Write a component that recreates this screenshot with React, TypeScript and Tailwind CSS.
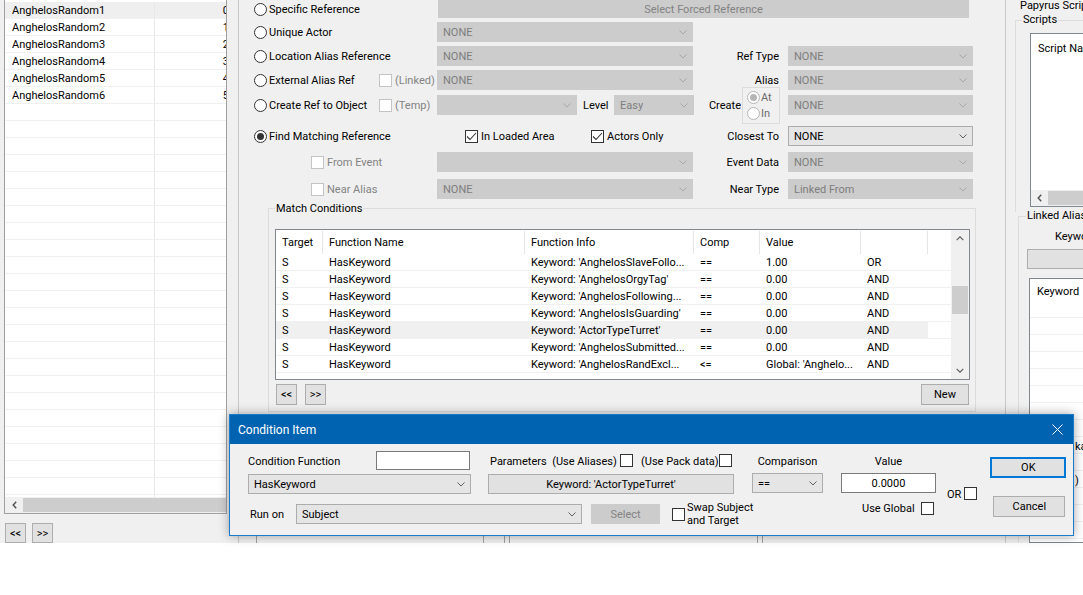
import React from "react"

const Chevron = ({ color = "#606060" }: { color?: string }) => (
  <svg width="8" height="5" viewBox="0 0 8 5" className="shrink-0">
    <path d="M0.5 0.5L4 4L7.5 0.5" fill="none" stroke={color} strokeWidth="1" />
  </svg>
)

const LeftArrow = () => (
  <svg width="5" height="8" viewBox="0 0 5 8">
    <path d="M4.2 0.7L1.2 4L4.2 7.3" fill="none" stroke="#505050" strokeWidth="1.4" />
  </svg>
)

const UpArrow = ({ down = false }: { down?: boolean }) => (
  <svg width="8" height="5" viewBox="0 0 8 5">
    <path d={down ? "M0.7 0.8L4 4.2L7.3 0.8" : "M0.7 4.2L4 0.8L7.3 4.2"} fill="none" stroke="#606060" strokeWidth="1.2" />
  </svg>
)

function Combo({ text = "", disabled = false, className = "" }: { text?: string; disabled?: boolean; className?: string }) {
  return (
    <div
      className={`h-[20px] shrink-0 flex items-center justify-between pl-[5px] pr-[5px] border ${
        disabled ? "bg-[#cccccc] border-[#cccccc] text-[#7d7d7d]" : "bg-[#e5e5e5] border-[#acacac] text-black"
      } ${className}`}
    >
      <span className="truncate">{text}</span>
      <Chevron color={disabled ? "#a9a9a9" : "#606060"} />
    </div>
  )
}

function Btn({ children, className = "", disabled = false }: { children?: React.ReactNode; className?: string; disabled?: boolean }) {
  return (
    <div
      className={`shrink-0 flex items-center justify-center border ${
        disabled ? "bg-[#cccccc] border-[#cccccc] text-[#838383]" : "bg-[#e1e1e1] border-[#adadad] text-black"
      } ${className}`}
    >
      {children}
    </div>
  )
}

function Check({ checked = false, disabled = false }: { checked?: boolean; disabled?: boolean }) {
  return (
    <span
      className={`w-[13px] h-[13px] shrink-0 border flex items-center justify-center bg-white ${
        disabled ? "border-[#c4c4c4]" : "border-[#333333]"
      }`}
    >
      {checked && (
        <svg width="11" height="9" viewBox="0 0 11 9">
          <path d="M1 4.5L4 7.5L10 1" fill="none" stroke="#333333" strokeWidth="1.1" />
        </svg>
      )}
    </span>
  )
}

function Radio({ checked = false, disabled = false }: { checked?: boolean; disabled?: boolean }) {
  return (
    <span
      className={`w-[13px] h-[13px] shrink-0 rounded-full border flex items-center justify-center bg-white ${
        disabled ? "border-[#b5b5b5]" : "border-[#333333]"
      }`}
    >
      {checked && <span className={`w-[7px] h-[7px] rounded-full ${disabled ? "bg-[#b5b5b5]" : "bg-[#333333]"}`} />}
    </span>
  )
}

const leftItems = ["AnghelosRandom1", "AnghelosRandom2", "AnghelosRandom3", "AnghelosRandom4", "AnghelosRandom5", "AnghelosRandom6"]

function LeftList() {
  const rows = Array.from({ length: 30 }, (_, i) => i)
  return (
    <div className="w-[227px] shrink-0 flex flex-col">
      <div className="ml-[4px] h-[524px] border-l border-r border-b border-[#a0a0a0] bg-white flex flex-col overflow-hidden">
        <div className="flex-1 pt-[2px] overflow-hidden">
          {rows.map((i) => (
            <div key={i} className={`h-[17px] flex border-b border-[#f0f0f0] ${i === 0 ? "bg-[#efefef]" : ""}`}>
              <div className="w-[150px] shrink-0 border-r border-[#e8e8e8] pl-[7px] flex items-center">{leftItems[i] ?? ""}</div>
              <div className="flex-1 flex items-center justify-end">
                <span className="-mr-[3px]">{i < 6 ? i : ""}</span>
              </div>
            </div>
          ))}
        </div>
        <div className="h-[16px] shrink-0 flex bg-[#f0f0f0]">
          <div className="w-[18px] flex items-center justify-center">
            <LeftArrow />
          </div>
          <div className="flex-1 bg-[#cdcdcd] my-[1px]" />
        </div>
      </div>
      <div className="mt-[9px] ml-[5px] flex gap-[6px]">
        <Btn className="w-[21px] h-[20px]">&lt;&lt;</Btn>
        <Btn className="w-[21px] h-[20px]">&gt;&gt;</Btn>
      </div>
    </div>
  )
}

const condRows = [
  ["S", "HasKeyword", "Keyword: 'AnghelosSlaveFollo...", "==", "1.00", "OR"],
  ["S", "HasKeyword", "Keyword: 'AnghelosOrgyTag'", "==", "0.00", "AND"],
  ["S", "HasKeyword", "Keyword: 'AnghelosFollowing...", "==", "0.00", "AND"],
  ["S", "HasKeyword", "Keyword: 'AnghelosIsGuarding'", "==", "0.00", "AND"],
  ["S", "HasKeyword", "Keyword: 'ActorTypeTurret'", "==", "0.00", "AND"],
  ["S", "HasKeyword", "Keyword: 'AnghelosSubmitted...", "==", "0.00", "AND"],
  ["S", "HasKeyword", "Keyword: 'AnghelosRandExcl...", "<=", "Global: 'Anghelo...", "AND"],
]
const colW = ["w-[47px]", "w-[202px]", "w-[169px]", "w-[66px]", "w-[101px]", "w-[67px]"]
const headers = ["Target", "Function Name", "Function Info", "Comp", "Value", ""]

function ConditionsTable() {
  return (
    <div className="mt-[14px] w-[695px] h-[151px] border border-[#828790] bg-white flex overflow-hidden">
      <div className="w-[675px] shrink-0 flex flex-col">
        <div className="h-[24px] shrink-0 flex pt-[1px]">
          {headers.map((h, i) => (
            <div key={i} className={`${colW[i]} shrink-0 border-r border-[#e5e5e5] pl-[6px] flex items-center`}>
              {h}
            </div>
          ))}
        </div>
        {condRows.map((r, ri) => (
          <div key={ri} className="h-[17px] shrink-0 flex border-b border-[#f0f0f0]">
            <div className={`flex ${ri === 4 ? "bg-[#f0f0f0]" : ""}`}>
              {r.map((c, ci) => (
                <div key={ci} className={`${colW[ci]} shrink-0 pl-[6px] pt-[1px] flex items-center overflow-hidden`}>
                  {c}
                </div>
              ))}
            </div>
          </div>
        ))}
      </div>
      <div className="w-[18px] shrink-0 bg-[#f0f0f0] flex flex-col">
        <div className="h-[17px] flex items-center justify-center">
          <UpArrow />
        </div>
        <div className="h-[39px]" />
        <div className="h-[28px] mx-[1px] bg-[#cdcdcd]" />
        <div className="flex-1" />
        <div className="h-[17px] flex items-center justify-center">
          <UpArrow down />
        </div>
      </div>
    </div>
  )
}

function RightLabel({ children }: { children: React.ReactNode }) {
  return <div className="w-[87px] shrink-0 text-right pr-[1px]">{children}</div>
}

function MiddlePanel() {
  return (
    <div className="w-[767px] shrink-0 border-l border-[#c8c8c8] flex flex-col pl-[15px]">
      {/* Specific reference */}
      <div className="h-[18px] flex items-center">
        <div className="w-[184px] shrink-0 flex items-center gap-[2px]">
          <Radio />
          <span>Specific Reference</span>
        </div>
        <Btn disabled className="w-[531px] h-[18px]">
          Select Forced Reference
        </Btn>
      </div>

      <div className="mt-[4px] h-[20px] flex items-center">
        <div className="w-[183px] shrink-0 flex items-center gap-[2px]">
          <Radio />
          <span>Unique Actor</span>
        </div>
        <Combo disabled text="NONE" className="w-[256px]" />
      </div>

      <div className="mt-[4px] h-[20px] flex items-center">
        <div className="w-[183px] shrink-0 flex items-center gap-[2px]">
          <Radio />
          <span>Location Alias Reference</span>
        </div>
        <Combo disabled text="NONE" className="w-[256px]" />
        <RightLabel>Ref Type</RightLabel>
        <Combo disabled text="NONE" className="ml-[8px] w-[185px]" />
      </div>

      <div className="mt-[4px] h-[20px] flex items-center">
        <div className="w-[125px] shrink-0 flex items-center gap-[2px]">
          <Radio />
          <span>External Alias Ref</span>
        </div>
        <div className="w-[58px] shrink-0 flex items-center gap-[3px] text-[#838383]">
          <Check disabled />
          <span>(Linked)</span>
        </div>
        <Combo disabled text="NONE" className="w-[256px]" />
        <RightLabel>Alias</RightLabel>
        <Combo disabled text="NONE" className="ml-[8px] w-[185px]" />
      </div>

      <div className="mt-[5px] h-[20px] flex items-center">
        <div className="w-[125px] shrink-0 flex items-center gap-[2px]">
          <Radio />
          <span>Create Ref to Object</span>
        </div>
        <div className="w-[58px] shrink-0 flex items-center gap-[3px] text-[#838383]">
          <Check disabled />
          <span>(Temp)</span>
        </div>
        <Combo disabled className="w-[140px]" />
        <div className="w-[37px] shrink-0 pl-[6px]">Level</div>
        <Combo disabled text="Easy" className="w-[80px]" />
        <div className="w-[48px] shrink-0 text-right pr-[1px]">Create</div>
        <div className="w-[38px] h-[37px] shrink-0 border border-[#dcdcdc] flex flex-col justify-center gap-[3px] pl-[4px] text-[#6d6d6d]">
          <div className="flex items-center gap-[1px]">
            <Radio disabled checked />
            <span>At</span>
          </div>
          <div className="flex items-center gap-[1px]">
            <Radio disabled />
            <span>In</span>
          </div>
        </div>
        <Combo disabled text="NONE" className="ml-[8px] w-[185px]" />
      </div>

      <div className="mt-[11px] h-[20px] flex items-center">
        <div className="w-[211px] shrink-0 flex items-center gap-[2px]">
          <Radio checked />
          <span>Find Matching Reference</span>
        </div>
        <div className="w-[126px] shrink-0 flex items-center gap-[3px]">
          <Check checked />
          <span>In Loaded Area</span>
        </div>
        <div className="w-[102px] shrink-0 flex items-center gap-[3px]">
          <Check checked />
          <span>Actors Only</span>
        </div>
        <RightLabel>Closest To</RightLabel>
        <Combo text="NONE" className="ml-[8px] w-[185px]" />
      </div>

      <div className="mt-[6px] h-[20px] flex items-center">
        <div className="w-[57px] shrink-0" />
        <div className="w-[126px] shrink-0 flex items-center gap-[3px] text-[#838383]">
          <Check disabled />
          <span>From Event</span>
        </div>
        <Combo disabled className="w-[256px]" />
        <RightLabel>Event Data</RightLabel>
        <Combo disabled text="NONE" className="ml-[8px] w-[185px]" />
      </div>

      <div className="mt-[7px] h-[20px] flex items-center">
        <div className="w-[57px] shrink-0" />
        <div className="w-[126px] shrink-0 flex items-center gap-[3px] text-[#838383]">
          <Check disabled />
          <span>Near Alias</span>
        </div>
        <Combo disabled text="NONE" className="w-[256px]" />
        <RightLabel>Near Type</RightLabel>
        <Combo disabled text="Linked From" className="ml-[8px] w-[185px]" />
      </div>

      {/* Match Conditions group */}
      <div className="mt-[9px] ml-[14px] w-[708px] shrink-0 border border-[#dcdcdc] flex flex-col pl-[6px] pb-[6px]">
        <span className="-mt-[7px] h-[14px] leading-[14px] w-fit px-[1px] bg-[#f0f0f0]">Match Conditions</span>
        <div className="-mt-[1px]">
          <ConditionsTable />
        </div>
        <div className="mt-[4px] w-[695px] flex items-center gap-[8px] pl-[1px] pr-[1px]">
          <Btn className="w-[21px] h-[21px]">&lt;&lt;</Btn>
          <Btn className="w-[21px] h-[21px]">&gt;&gt;</Btn>
          <Btn className="ml-auto w-[48px] h-[21px]">New</Btn>
        </div>
      </div>

      {/* lower panels, mostly hidden under the dialog */}
      <div className="mt-[2px] flex-1 flex">
        <div className="ml-[2px] w-[228px] border-l border-r border-[#a0a0a0]" />
        <div className="ml-[20px] w-[5px] border-l border-[#a0a0a0]" />
        <div className="w-[249px] border-l border-r border-[#a0a0a0]" />
        <div className="ml-[4px] flex-1 border-l border-[#a0a0a0]" />
      </div>
    </div>
  )
}

function RightPanel() {
  const rows = Array.from({ length: 14 }, (_, i) => i)
  return (
    <div className="flex-1 min-w-0 border-l border-[#c8c8c8] flex flex-col overflow-hidden">
      <div className="pl-[14px] h-[11px] leading-[11px] shrink-0">Papyrus Scripts</div>

      <div className="mt-[9px] ml-[9px] h-[192px] shrink-0 border-l border-t border-[#dcdcdc] flex flex-col">
        <span className="-mt-[8px] ml-[6px] h-[14px] leading-[14px] w-fit px-[1px] bg-[#f0f0f0]">Scripts</span>
        <div className="mt-[6px] ml-[14px] h-[174px] w-[80px] shrink-0 border border-[#828790] bg-white flex flex-col">
          <div className="pl-[7px] pt-[8px]">Script Name</div>
          <div className="flex-1" />
          <div className="h-[16px] flex bg-[#f0f0f0]">
            <div className="w-[17px] flex items-center justify-center">
              <LeftArrow />
            </div>
            <div className="flex-1 bg-[#cdcdcd] my-[1px]" />
          </div>
        </div>
      </div>

      <div className="mt-[4px] ml-[12px] flex-1 min-h-0 border-l border-t border-[#dcdcdc] flex flex-col">
        <span className="-mt-[8px] ml-[7px] h-[14px] leading-[14px] w-fit px-[1px] bg-[#f0f0f0] shrink-0">Linked Aliases</span>
        <div className="mt-[7px] h-[14px] pl-[36px] shrink-0">Keywords</div>
        <Btn className="mt-[5px] ml-[8px] w-[70px] h-[20px]" />
        <div className="mt-[9px] ml-[10px] flex-1 min-h-0 w-[80px] border border-[#828790] bg-white flex flex-col overflow-hidden">
          <div className="h-[39px] shrink-0 border-b border-[#f0f0f0] pl-[7px] pt-[6px]">Keyword</div>
          {rows.map((i) => (
            <div key={i} className="h-[17px] shrink-0 border-b border-[#f0f0f0] flex items-end pl-[45px]">
              {i === 7 ? "ka" : i === 9 ? ")" : ""}
            </div>
          ))}
        </div>
      </div>
    </div>
  )
}

function ConditionDialog() {
  return (
    <div className="absolute left-[229px] top-[414px] w-[845px] h-[122px] border border-[#1979ca] bg-[#f0f0f0] shadow-[0_0_10px_rgba(0,0,0,0.35)] flex flex-col">
      <div className="h-[29px] shrink-0 bg-[#0063b1] flex items-center justify-between pl-[8px] pr-[10px] text-white text-[12px]">
        <span className="pt-[1px]">Condition Item</span>
        <svg width="11" height="11" viewBox="0 0 11 11">
          <path d="M0.5 0.5L10.5 10.5M10.5 0.5L0.5 10.5" stroke="#ffffff" strokeWidth="1" />
        </svg>
      </div>
      <div className="flex-1 flex pl-[18px]">
        {/* function / parameters / run on */}
        <div className="w-[486px] shrink-0 flex flex-col">
          <div className="mt-[7px] h-[19px] flex items-center">
            <span className="w-[128px] shrink-0 pt-[2px]">Condition Function</span>
            <div className="w-[94px] h-[19px] shrink-0 bg-white border border-[#7a7a7a]" />
            <span className="ml-[20px] w-[130px] shrink-0 pt-[2px]">Parameters&nbsp;&nbsp;(Use Aliases)</span>
            <Check />
            <span className="ml-[8px] w-[78px] shrink-0 pt-[2px]">(Use Pack data)</span>
            <Check />
          </div>
          <div className="mt-[4px] h-[20px] flex items-center">
            <Combo text="HasKeyword" className="w-[223px]" />
            <Btn className="ml-[17px] w-[246px] h-[20px]">Keyword: 'ActorTypeTurret'</Btn>
          </div>
          <div className="mt-[10px] h-[20px] flex items-center">
            <span className="w-[48px] shrink-0 pl-[2px]">Run on</span>
            <Combo text="Subject" className="w-[286px]" />
            <Btn disabled className="ml-[9px] w-[69px] h-[20px]">
              Select
            </Btn>
            <div className="ml-[12px] flex items-center gap-[2px]">
              <Check />
              <div className="flex flex-col leading-[13px]">
                <span>Swap Subject</span>
                <span>and Target</span>
              </div>
            </div>
          </div>
        </div>

        {/* comparison */}
        <div className="ml-[18px] w-[71px] shrink-0 flex flex-col">
          <div className="mt-[7px] h-[19px] pt-[2px] flex items-center justify-center">Comparison</div>
          <Combo text="==" className="mt-[3px] w-[71px]" />
        </div>

        {/* value */}
        <div className="ml-[18px] w-[95px] shrink-0 flex flex-col">
          <div className="mt-[7px] h-[19px] pt-[2px] flex items-center justify-center">Value</div>
          <div className="mt-[3px] h-[20px] bg-white border border-[#7a7a7a] flex items-center justify-center">0.0000</div>
          <div className="mt-[9px] flex items-center justify-between pl-[21px] pr-[2px]">
            <span>Use Global</span>
            <Check />
          </div>
        </div>

        {/* or */}
        <div className="ml-[11px] shrink-0 flex flex-col">
          <div className="mt-[41px] flex items-center gap-[3px]">
            <span className="pt-[3px]">OR</span>
            <Check />
          </div>
        </div>

        {/* buttons */}
        <div className="ml-[13px] w-[76px] shrink-0 flex flex-col">
          <Btn className="mt-[13px] w-[76px] h-[21px] !border-2 !border-[#0078d7]">OK</Btn>
          <Btn className="mt-[18px] ml-[3px] w-[72px] h-[21px]">Cancel</Btn>
        </div>
      </div>
    </div>
  )
}

export default function App() {
  return (
    <div className="relative w-[1083px] h-[595px] bg-white overflow-hidden whitespace-nowrap text-[11px] leading-[13px] text-black font-[family-name:Roboto,sans-serif]">
      <div className="h-[543px] flex bg-[#f0f0f0]">
        <LeftList />
        <div className="w-[11px] shrink-0" />
        <MiddlePanel />
        <RightPanel />
      </div>
      <ConditionDialog />
    </div>
  )
}
